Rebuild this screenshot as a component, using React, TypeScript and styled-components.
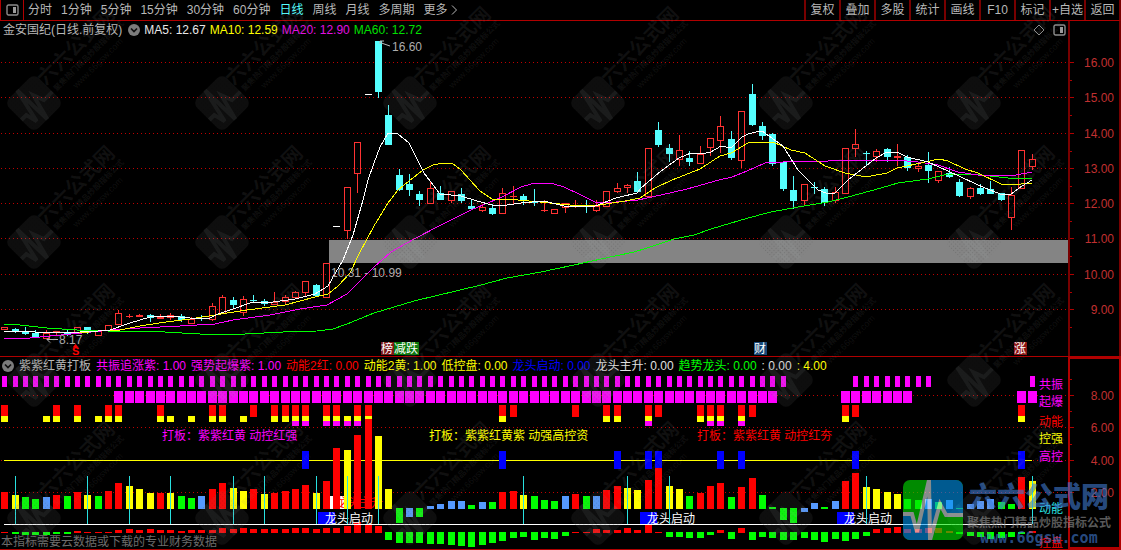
import React from "react";
import styled, { createGlobalStyle } from "styled-components";

const GlobalStyle = createGlobalStyle`
  * { box-sizing: border-box; }
  body {
    margin: 0;
    background: #000;
    color: #b8b8b8;
    font: 12px/16px "Liberation Sans", "Noto Sans CJK SC", sans-serif;
  }
`;

const RED = "#ff0000";
const CANDLE_RED = "#ff3232";
const CYAN = "#54ffff";
const MAGENTA = "#ff00ff";
const YELLOW = "#ffff00";
const GREEN = "#00ff00";
const BLUE = "#0000ff";
const LINE = "#b00000";
const DARK_LINE = "#780000";

const Page = styled.main`
  position: relative;
  width: 100%;
  overflow: hidden;
`;

const Toolbar = styled.nav`
  display: flex;
  height: 21px;
  border-bottom: 1px solid ${LINE};
  border-left: 1px solid ${LINE};
  border-right: 2px solid ${DARK_LINE};
`;

const PlainButton = styled.button`
  display: flex;
  align-items: center;
  padding: 0;
  border: 0;
  background: none;
  color: inherit;
  font: inherit;
  white-space: nowrap;
  cursor: pointer;
`;

const LayoutButton = styled(PlainButton)`
  width: 23px;
  justify-content: center;
  border-right: 1px solid ${LINE};
`;

const Periods = styled.div`
  display: flex;
  flex: 1;
  gap: 9px;
  padding-left: 4px;
`;

const PeriodButton = styled(PlainButton)<{ $active?: boolean }>`
  color: ${(p) => (p.$active ? CYAN : "inherit")};
`;

const ToolButton = styled(PlainButton)`
  width: 35px;
  justify-content: center;
  border-left: 2px solid ${DARK_LINE};
`;

const Panel = styled.section`
  display: grid;
  grid-template-columns: 1068fr 53fr;
  border-bottom: 1px solid ${LINE};
`;

const LegendRow = styled.header<{ $height: number; $gap: number }>`
  display: flex;
  align-items: center;
  height: ${(p) => p.$height}px;
  gap: ${(p) => p.$gap}px;
  padding: 0 2px;
  white-space: nowrap;
`;

const StockName = styled.span`
  padding: 0 2px 0 1px;
`;

const LegendItem = styled.span<{ $color: string }>`
  color: ${(p) => p.$color};
`;

const LegendTools = styled.div`
  display: flex;
  gap: 8px;
  margin-left: auto;
`;

const Axis = styled.div<{ $boxed?: boolean }>`
  display: flex;
  align-items: flex-end;
  box-shadow: ${(p) =>
    p.$boxed
      ? `inset 0 0 0 2px ${LINE}`
      : `inset 2px 0 ${DARK_LINE}, inset -2px 0 ${DARK_LINE}`};
`;

const Plot = styled.svg`
  display: block;
  width: 100%;
  height: auto;
  font: 12px "Liberation Sans", "Noto Sans CJK SC", sans-serif;
`;

const WatermarkLayer = styled.svg`
  position: absolute;
  inset: 0;
  width: 100%;
  height: 100%;
  pointer-events: none;
  font-family: "Noto Sans CJK SC", sans-serif;
`;

const Brand = styled.aside`
  position: absolute;
  right: 10px;
  bottom: 4px;
  display: flex;
  align-items: flex-end;
  gap: 4px;
  pointer-events: none;
`;

const BrandLogo = styled.svg`
  width: 60px;
  height: 60px;
  margin-bottom: 6px;
  opacity: 0.6;
`;

const BrandText = styled.div`
  display: flex;
  flex-direction: column;
  align-items: center;
  color: rgba(64, 124, 212, 0.62);
  font-family: "Noto Sans CJK SC", sans-serif;
  font-weight: 700;
`;

const BrandName = styled.strong`
  font-size: 28px;
  line-height: 38px;
`;

const BrandTag = styled.span`
  color: rgba(150, 150, 150, 0.6);
  font-size: 12px;
  line-height: 16px;
`;

const BrandUrl = styled.span`
  font: 700 15px/16px "DejaVu Sans Mono", monospace;
`;

const slot = (i: number) => Math.round(1.25 + 10.38 * i);

/* high, open/close top, open/close bottom, low; prefixed by candle kind */
type Candle = ["r" | "c" | "w", number, number, number, number];
const candles: Candle[] = [
  ["r", 327, 327, 330, 330], ["c", 328, 329, 331, 333], ["c", 327, 331, 334, 335], ["c", 330, 333, 337, 337],
  ["r", 330, 333, 339, 339], ["r", 331, 331, 333, 336], ["c", 329, 332, 334, 336], ["r", 327, 327, 333, 333],
  ["c", 327, 327, 332, 334], ["r", 331, 331, 336, 336], ["r", 325, 325, 331, 331], ["r", 310, 313, 325, 325],
  ["r", 314, 316, 317, 318], ["r", 314, 315, 317, 317], ["c", 314, 315, 318, 322], ["r", 314, 317, 319, 319],
  ["r", 313, 315, 318, 320], ["c", 314, 316, 320, 322], ["r", 317, 319, 324, 324], ["c", 315, 318, 319, 321],
  ["r", 303, 306, 320, 321], ["r", 295, 297, 314, 314], ["c", 297, 300, 305, 308], ["r", 296, 299, 313, 316],
  ["c", 295, 300, 301, 303], ["c", 299, 301, 304, 306], ["r", 292, 302, 305, 305], ["r", 295, 297, 302, 304],
  ["r", 291, 292, 298, 298], ["r", 281, 281, 293, 297], ["c", 284, 285, 296, 296], ["r", 263, 263, 298, 298],
  ["w", 226, 226, 227, 227], ["r", 187, 187, 231, 239], ["r", 142, 142, 174, 193], ["w", 94, 94, 95, 95],
  ["c", 41, 41, 92, 98], ["c", 105, 115, 145, 145], ["c", 169, 175, 190, 191], ["c", 174, 184, 190, 196],
  ["c", 191, 194, 200, 206], ["r", 182, 188, 204, 204], ["c", 186, 193, 200, 200], ["r", 191, 191, 201, 203],
  ["c", 188, 194, 201, 203], ["c", 200, 206, 209, 209], ["r", 204, 207, 211, 212], ["c", 204, 208, 214, 215],
  ["r", 188, 193, 214, 214], ["r", 186, 196, 197, 204], ["c", 194, 196, 200, 205], ["c", 189, 202, 203, 206],
  ["r", 200, 210, 211, 212], ["r", 209, 209, 214, 214], ["r", 203, 203, 208, 213], ["r", 200, 206, 207, 208],
  ["c", 200, 206, 207, 213], ["r", 200, 206, 211, 212], ["r", 191, 191, 207, 207], ["r", 183, 188, 192, 193],
  ["r", 184, 185, 188, 193], ["c", 172, 181, 192, 193], ["r", 148, 148, 197, 197], ["c", 122, 130, 145, 147],
  ["c", 144, 148, 154, 162], ["r", 135, 150, 160, 166], ["c", 151, 158, 162, 166], ["r", 146, 154, 164, 164],
  ["r", 138, 138, 148, 156], ["r", 116, 126, 141, 153], ["c", 131, 139, 158, 160], ["r", 111, 111, 161, 168],
  ["c", 84, 94, 125, 126], ["c", 122, 126, 136, 140], ["c", 133, 134, 164, 166], ["c", 162, 162, 189, 191],
  ["c", 176, 190, 201, 209], ["r", 184, 184, 201, 205], ["c", 182, 187, 188, 194], ["c", 187, 189, 203, 206],
  ["r", 187, 192, 201, 203], ["r", 148, 148, 194, 194], ["r", 129, 144, 149, 157], ["c", 151, 153, 154, 165],
  ["r", 149, 151, 157, 162], ["c", 148, 149, 157, 162], ["r", 144, 156, 158, 166], ["c", 155, 157, 168, 171],
  ["r", 163, 166, 169, 172], ["c", 152, 165, 171, 183], ["r", 171, 171, 181, 183], ["c", 167, 173, 177, 178],
  ["c", 179, 182, 196, 197], ["r", 187, 188, 197, 199], ["c", 184, 188, 194, 195], ["c", 181, 189, 194, 194],
  ["c", 193, 193, 200, 201], ["r", 187, 195, 218, 230], ["r", 150, 150, 189, 189], ["r", 154, 159, 167, 170],
];

const averages = [
  {
    color: GREEN,
    points:
      "4,324 20,325 47,328 77,330 108,331 147,331 200,334 245,334 283,332 317,331 333,329 347,324 374,313 414,301 481,285 507,278 541,272 574,265 601,259 634,252 647,248 674,239 694,235 711,229 748,218 771,212 798,207 828,202 848,197 881,188 898,183 928,179 948,174 981,175 1008,178 1032,178",
  },
  {
    color: MAGENTA,
    points:
      "4,339 30,338 50,336 82,333 110,330 140,328 180,326 215,324 233,320 270,315 300,309 327,305 347,294 353,288 374,267 391,252 414,239 441,225 471,210 502,197 521,187 531,184 544,183 554,184 564,187 581,195 595,202 616,202 638,200 661,195 687,189 719,180 732,177 747,171 765,163 783,162 798,161 828,161 848,160 895,160 918,162 938,165 958,172 978,175 1011,176 1032,172",
  },
  {
    color: YELLOW,
    points:
      "4,331 35,332 80,333 98,331 120,330 140,326 166,322 190,319 215,315 240,311 262,308 285,305 300,301 315,297 328,294 338,286 350,273 360,252 374,226 388,203 398,190 409,181 423,170 433,165 443,163 452,163 461,170 470,180 480,191 492,199 507,199 540,202 570,205 600,205 625,201 640,198 655,188 672,180 700,169 720,156 731,153 748,143 773,142 791,150 805,153 825,166 845,173 866,177 887,173 897,168 907,166 939,159 948,161 965,169 978,173 1001,184 1011,185 1032,183",
  },
  {
    color: "#ffffff",
    points:
      "4,331 35,332 46,333 80,332 98,331 110,330 130,323 150,317 160,316 180,317 200,319 210,318 218,314 233,309 253,302 273,302 295,299 315,294 328,286 343,260 353,235 363,200 368,180 374,163 380,147 388,133 398,134 409,143 424,173 430,181 440,194 451,195 461,196 477,201 492,205 507,205 521,203 544,201 564,206 584,206 595,206 616,198 637,193 641,188 661,171 679,158 691,153 701,154 711,152 721,146 731,148 742,137 748,134 756,132 762,131 783,146 798,170 818,190 826,193 835,193 848,180 876,158 887,152 897,152 907,157 928,162 939,167 959,176 978,185 995,192 1003,195 1011,194 1022,186 1032,180",
  },
];

/* bar colour and the y of its free end, one entry per slot */
const energy =
  "R492 Y495 G497 G499 B497 R495 G496 R492 Y495 G496 R491 R483 Y486 Y489 Y493 R493 Y493 G496 G498 B496 " +
  "R489 R483 Y488 Y491 R489 Y494 R493 R491 R489 R485 Y493 R481 R448 Y450 R435 R419 Y436 Y489 G523 B517 " +
  "G517 B506 B504 B501 B501 G505 B502 G502 R492 R491 Y495 G496 G500 G501 B496 R494 G496 B496 R490 R486 " +
  "Y488 Y490 R480 R468 Y486 Y489 G496 R493 R486 R483 G497 R487 R478 G495 G507 G520 G523 B512 B503 G507 " +
  "B501 R481 R473 Y487 Y489 Y492 Y494 G499 G500 B499 G502 B500 G508 B504 B501 B499 G502 G504 R477 Y481";

const control =
  "532 534 535 535 535 534 534 531 532 532 532 530 529 530 529 530 530 531 530 530 530 528 529 528 529 529 529 529 528 528 " +
  "529 528 528 526 522 524 526 540 543 543 543 544 544 545 546 547 545 543 541 538 537 540 538 539 536 532 532 529 530 530 " +
  "528 530 525 532 537 537 538 538 535 530 539 528 540 537 538 540 540 538 540 542 539 541 539 536 529 528 527 529 529 528 " +
  "528 531 534 536 537 539 538 537 534 531";

const barColors: Record<string, string> = { R: RED, Y: YELLOW, G: GREEN, B: "#5599ff" };

/* stacked signal blocks: R red, Y yellow, M magenta */
const signals: Record<number, string> = {
  0: "RY", 4: "Y", 5: "RY", 7: "RY", 9: "Y", 10: "RY", 11: "RY", 15: "RY", 16: "Y", 18: "Y", 20: "RY", 21: "RY",
  23: "Y", 24: "R", 26: "RY", 27: "RY", 28: "RYM", 29: "RYM", 31: "RYM", 32: "RYM", 33: "YM", 34: "RYM", 35: "RY",
  48: "RY", 49: "R", 55: "R", 58: "RY", 59: "RY", 62: "RYM", 63: "R", 67: "RY", 68: "RYM", 69: "RYM", 71: "RYM",
  72: "R", 81: "RY", 82: "R", 98: "RY",
};

const range = (a: number, b: number) => Array.from({ length: b - a + 1 }, (_, k) => a + k);
const resonance = [...range(0, 75), ...range(82, 89), 99];
const surge = [...range(11, 74), ...range(81, 87), 98, 99];
const highControl = [29, 48, 59, 62, 63, 69, 71, 82, 98];
const turns = [1, 8, 12, 16, 22, 25, 30, 33, 36, 50, 60, 64, 83, 99];

const priceLevels: [string, number][] = [
  ["16.00", 62], ["15.00", 97], ["14.00", 133], ["13.00", 168],
  ["12.00", 203], ["11.00", 238], ["10.00", 274], ["9.00", 309],
];
const scoreLevels: [string, number][] = [["8.00", 395], ["6.00", 427], ["4.00", 460], ["2.00", 492]];

const PanelIcon = () => (
  <svg width="13" height="12" viewBox="0 0 13 12" fill="none" aria-hidden="true">
    <rect x="1" y="1" width="11" height="10" rx="1.5" stroke="#8c8c8c" strokeWidth="1.4" />
    <rect x="7" y="3" width="3" height="6" fill="#9c9c9c" />
  </svg>
);

const ChevronDisc = () => (
  <svg width="12" height="12" viewBox="0 0 12 12" fill="none" aria-hidden="true">
    <circle cx="6" cy="6" r="6" fill="#7c7c7c" />
    <path d="M3 4.5 6 7.5 9 4.5" stroke="#101010" strokeWidth="1.7" />
  </svg>
);

const GridLines = ({ levels }: { levels: [string, number][] }) => (
  <g fill="none" stroke="#c00000" strokeDasharray="1 3">
    {levels.map(([label, y]) => (
      <path key={label} d={`M1 ${y + 0.5}H1068`} />
    ))}
  </g>
);

const AxisScale = ({ levels, half }: { levels: [string, number][]; half: number }) => (
  <>
    {levels.map(([label, y]) => (
      <g key={label}>
        <path d={`M1070 ${y + 0.5}h4M1070 ${y + half + 0.5}h2`} stroke={LINE} shapeRendering="crispEdges" />
        <text x="1114" y={y + 5} textAnchor="end" fill="#c03030">
          {label}
        </text>
      </g>
    ))}
  </>
);

const CandleMark = ({ candle, index }: { candle: Candle; index: number }) => {
  const [kind, high, top, bottom, low] = candle;
  const x = slot(index);
  if (kind === "w") return <rect x={x} y={top} width="7" height="1" fill="#fff" />;
  const color = kind === "r" ? CANDLE_RED : CYAN;
  const hollow = kind === "r" && bottom - top > 2;
  return (
    <g>
      <path d={`M${x + 3.5} ${high}V${top}M${x + 3.5} ${bottom}V${low}`} stroke={color} />
      {hollow ? (
        <rect x={x + 0.5} y={top + 0.5} width="6" height={bottom - top - 1} fill="none" stroke={color} />
      ) : (
        <rect x={x} y={top} width="7" height={bottom - top} fill={color} />
      )}
    </g>
  );
};

const EventBadge = ({ x, text, fill }: { x: number; text: string; fill: string }) => (
  <g>
    <rect x={x} y="342" width={12 * text.length + 1} height="13" fill={fill} />
    <text x={x} y="353" fill="#fff">
      {text}
    </text>
  </g>
);

const PriceChart = () => (
  <Plot viewBox="0 39 1068 317" role="img" aria-label="日线">
    <g shapeRendering="crispEdges">
      <GridLines levels={priceLevels} />
      <rect x="329" y="240" width="739" height="23" fill="#848484" />
      {candles.map((c, i) => (
        <CandleMark key={i} candle={c} index={i} />
      ))}
      {averages.map((a) => (
        <polyline key={a.color} points={a.points} fill="none" stroke={a.color} />
      ))}
    </g>
    <g fill="#acacac">
      <text x="331" y="277">10.31 - 10.99</text>
      <text x="392" y="51">16.60</text>
      <text x="59" y="344">8.17</text>
    </g>
    <g fill="none" stroke="#b8b8b8">
      <path d="M390 46 380 42.5M384 41h-4v3" />
      <path d="M58 339.500H47M50 336.500l-3 3 3 3" />
    </g>
    <path d="M72.500 347.500h6L75.500 344z" fill={RED} />
    <text x="72" y="355" fill={RED} fontSize="11" fontWeight="700">S</text>
    <EventBadge x={381} text="榜" fill="#7c1818" />
    <EventBadge x={394} text="减跌" fill="#087808" />
    <EventBadge x={754} text="财" fill="#184878" />
    <EventBadge x={1014} text="涨" fill="#8c1414" />
  </Plot>
);

const SignalStack = ({ index, code }: { index: number; code: string }) => {
  const x = slot(index);
  return (
    <g>
      {code.includes("R") && <rect x={x} y="405" width="7" height="12" fill={RED} />}
      {code.includes("M") && <rect x={x} y="421" width="7" height="5" fill={MAGENTA} />}
      {code.includes("Y") && <rect x={x} y="416" width="7" height={code.includes("M") ? 5 : 6} fill={YELLOW} />}
    </g>
  );
};

const StartTag = ({ x }: { x: number }) => (
  <g>
    <rect x={x} y="512" width="17" height="12" fill={BLUE} />
    <text x={x + 7} y="523" fill="#fff">龙头启动</text>
  </g>
);

const rowLabels: [string, number, string][] = [
  ["共振", 389, MAGENTA], ["起爆", 406, MAGENTA], ["动能", 426, RED], ["控强", 443, YELLOW],
  ["高控", 461, MAGENTA], ["动能", 513, "#28e0e0"], ["控盘", 547, RED],
];

const SignalChart = () => (
  <Plot viewBox="0 374 1068 175" role="img" aria-label="紫紫红黄打板">
    <g shapeRendering="crispEdges">
      <GridLines levels={scoreLevels} />
      {resonance.map((i) => (
        <rect key={i} x={slot(i) + 1} y="376" width="5" height="11" fill={MAGENTA} />
      ))}
      {surge.map((i) => (
        <rect key={i} x={slot(i) - 1} y="391" width="9" height="12" fill={MAGENTA} />
      ))}
      <rect x="4" y="460" width="1028" height="1" fill={YELLOW} />
      {highControl.map((i) => (
        <rect key={i} x={slot(i)} y="451" width="7" height="18" fill={BLUE} />
      ))}
      {Object.entries(signals).map(([i, code]) => (
        <SignalStack key={i} index={Number(i)} code={code} />
      ))}
      <rect x="330" y="496" width="14" height="13" fill="#fff" />
    </g>
    <text x="335" y="507" fill={RED}>龙头主升</text>
    <g shapeRendering="crispEdges">
      {energy.split(" ").map((bar, i) => {
        const end = Number(bar.slice(1));
        const down = end > 508;
        return (
          <rect
            key={i}
            x={slot(i)}
            y={down ? 508 : end}
            width="7"
            height={down ? end - 508 : 509 - end}
            fill={barColors[bar[0]]}
          />
        );
      })}
      {control.split(" ").map((value, i) => {
        const end = Number(value);
        const down = end > 532;
        return (
          <rect
            key={i}
            x={slot(i)}
            y={down ? 532 : end}
            width="7"
            height={down ? end - 532 : 533 - end}
            fill={down ? GREEN : RED}
          />
        );
      })}
    </g>
    <StartTag x={318} />
    <StartTag x={640} />
    <StartTag x={837} />
    <g shapeRendering="crispEdges">
      {turns.map((i) => (
        <rect key={i} x={slot(i) + 3} y="476" width="1" height="48" fill="#28e0e0" />
      ))}
      <rect x="4" y="524" width="1028" height="1" fill="#fff" />
    </g>
    <text x="162" y="440" fill={MAGENTA}>打板：紫紫红黄 动控红强</text>
    <text x="429" y="440" fill={YELLOW}>打板：紫紫红黄紫 动强高控资</text>
    <text x="697" y="440" fill={RED}>打板：紫紫红黄 动控红夯</text>
    {rowLabels.map(([label, y, color]) => (
      <text key={y} x="1039" y={y} fill={color}>
        {label}
      </text>
    ))}
    <text x="1" y="546" fill="#6c6c6c">本指标需要云数据或下载的专业财务数据</text>
  </Plot>
);

const Watermarks = () => (
  <WatermarkLayer aria-hidden="true">
    <defs>
      <pattern id="weave" width="3" height="3" patternUnits="userSpaceOnUse">
        <rect width="3" height="3" fill="#808080" fillOpacity="0.11" />
        <rect width="1" height="1" fill="#000" fillOpacity="0.12" />
      </pattern>
      <g id="mark" transform="rotate(-45)">
        <rect x="-21" y="-21" width="42" height="42" rx="7" fill="url(#weave)" />
        <path
          d="M-21 3H-14L-11 15-3 -21 -2 21 5 -6 9 5H21"
          fill="none"
          stroke="#a8b4b4"
          strokeOpacity="0.09"
          strokeWidth="4"
        />
        <g fill="#808080" fillOpacity="0.12">
          <text x="20" y="-4" fontSize="20" fontWeight="700">六六公式网</text>
          <text x="24" y="8" fontSize="8" fontWeight="700">聚焦热门精品炒股指标公式</text>
          <text x="40" y="20" fontSize="9" fontFamily="Liberation Sans">www.66gsw.com</text>
        </g>
      </g>
    </defs>
    {[103, 242, 380, 518, 657].map((y) =>
      [34, 222, 410, 598, 786, 974].map((x) => (
        <use key={`${x}-${y}`} href="#mark" transform={`translate(${x} ${y})`} />
      ))
    )}
  </WatermarkLayer>
);

const periods = ["分时", "1分钟", "5分钟", "15分钟", "30分钟", "60分钟", "日线", "周线", "月线", "多周期"];
const tools = ["复权", "叠加", "多股", "统计", "画线", "F10", "标记", "+自选", "返回"];

const indicatorLegend: [string, string][] = [
  ["共振追涨紫: 1.00", MAGENTA], ["强势起爆紫: 1.00", MAGENTA], ["动能2红: 0.00", RED], ["动能2黄: 1.00", YELLOW],
  ["低控盘: 0.00", YELLOW], ["龙头启动: 0.00", BLUE], ["龙头主升: 0.00", "#e0e0e0"], ["趋势龙头: 0.00", GREEN],
  [": 0.00", "#e0e0e0"], [": 4.00", YELLOW],
];

export default function App() {
  return (
    <>
      <GlobalStyle />
      <Page>
        <Toolbar>
          <LayoutButton aria-label="布局">
            <PanelIcon />
          </LayoutButton>
          <Periods>
            {periods.map((p) => (
              <PeriodButton key={p} $active={p === "日线"}>
                {p}
              </PeriodButton>
            ))}
            <PeriodButton>
              更多
              <svg width="14" height="12" viewBox="0 0 14 12" fill="none" aria-hidden="true">
                <path d="M4 1.5 8.500 6 4 10.500" stroke="#b8b8b8" />
              </svg>
            </PeriodButton>
          </Periods>
          {tools.map((t) => (
            <ToolButton key={t}>{t}</ToolButton>
          ))}
        </Toolbar>

        <Panel>
          <div>
            <LegendRow $height={18} $gap={4}>
              <StockName>金安国纪(日线.前复权)</StockName>
              <PlainButton aria-label="展开">
                <ChevronDisc />
              </PlainButton>
              <LegendItem $color="#e8e8e8">MA5: 12.67</LegendItem>
              <LegendItem $color={YELLOW}>MA10: 12.59</LegendItem>
              <LegendItem $color="#e010e0">MA20: 12.90</LegendItem>
              <LegendItem $color="#00e000">MA60: 12.72</LegendItem>
              <LegendTools>
                <PlainButton aria-label="标记点">
                  <svg width="12" height="12" viewBox="0 0 12 12" fill="none" aria-hidden="true">
                    <path d="M6 1 11 6 6 11 1 6z" stroke="#8c8c8c" />
                  </svg>
                </PlainButton>
                <PlainButton aria-label="侧栏">
                  <PanelIcon />
                </PlainButton>
              </LegendTools>
            </LegendRow>
            <PriceChart />
          </div>
          <Axis>
            <Plot viewBox="1068 39 53 317" aria-hidden="true">
              <AxisScale levels={priceLevels} half={18} />
            </Plot>
          </Axis>
        </Panel>

        <Panel>
          <div>
            <LegendRow $height={17} $gap={5}>
              <PlainButton aria-label="展开">
                <ChevronDisc />
              </PlainButton>
              <span>紫紫红黄打板</span>
              {indicatorLegend.map(([text, color]) => (
                <LegendItem key={text} $color={color}>
                  {text}
                </LegendItem>
              ))}
            </LegendRow>
            <SignalChart />
          </div>
          <Axis $boxed>
            <Plot viewBox="1068 374 53 175" aria-hidden="true">
              <AxisScale levels={scoreLevels} half={-16} />
            </Plot>
          </Axis>
        </Panel>

        <Watermarks />
        <Brand>
          <BrandLogo viewBox="0 0 60 60" aria-hidden="true">
            <clipPath id="logo-shape">
              <rect width="60" height="60" rx="7" />
            </clipPath>
            <g clipPath="url(#logo-shape)">
              <rect width="60" height="60" fill="#00e600" />
              <path d="M26 0H60V35H43L37 22 27 60H0V34H9L14 52z" fill="#0096f0" />
              <path
                d="M0 34H9L14 52 26 0 27 60 37 24 43 35H60"
                fill="none"
                stroke="#e0e8e8"
                strokeWidth="4"
              />
            </g>
          </BrandLogo>
          <BrandText>
            <BrandName>六六公式网</BrandName>
            <BrandTag>聚焦热门精品炒股指标公式</BrandTag>
            <BrandUrl>www.66gsw.com</BrandUrl>
          </BrandText>
        </Brand>
      </Page>
    </>
  );
}
